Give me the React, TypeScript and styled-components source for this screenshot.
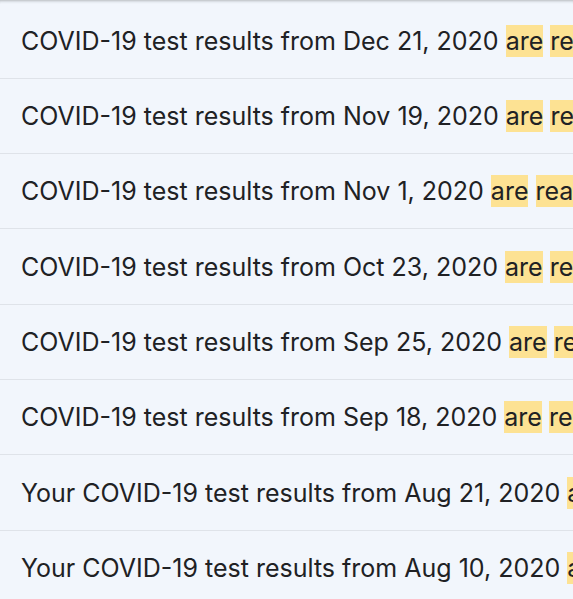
import styled, { createGlobalStyle } from "styled-components";

const GlobalStyle = createGlobalStyle`
  html, body {
    margin: 0;
    padding: 0;
    background: #f2f6fc;
  }
  body {
    font-family: Inter, Roboto, "Noto Sans", Arial, sans-serif;
    overflow: hidden;
  }
`;

const rows = [
  { prefix: "COVID-19 test results from", date: "Dec 21, 2020" },
  { prefix: "COVID-19 test results from", date: "Nov 19, 2020" },
  { prefix: "COVID-19 test results from", date: "Nov 1, 2020" },
  { prefix: "COVID-19 test results from", date: "Oct 23, 2020" },
  { prefix: "COVID-19 test results from", date: "Sep 25, 2020" },
  { prefix: "COVID-19 test results from", date: "Sep 18, 2020" },
  { prefix: "Your COVID-19 test results from", date: "Aug 21, 2020" },
  { prefix: "Your COVID-19 test results from", date: "Aug 10, 2020" },
];

export default function App() {
  return (
    <>
      <GlobalStyle />
      <List>
        {rows.map((r, i) => (
          <Row key={i}>
            <Subject>
              {r.prefix} {r.date} <Mark>are</Mark> <Mark>ready</Mark>
            </Subject>
          </Row>
        ))}
      </List>
    </>
  );
}

const List = styled.div`
  display: flex;
  flex-direction: column;
  padding-top: 3.5px;
  box-shadow: inset 0 3px 3px -2px rgba(60, 64, 67, 0.35);
  min-height: 599px;
  box-sizing: border-box;
`;

const Row = styled.div`
  height: 74.33px;
  display: flex;
  align-items: center;
  padding-left: 21px;
  border-bottom: 1px solid #dfe3e9;
  background: #f2f6fc;
  overflow: hidden;
  flex-shrink: 0;
`;

const Subject = styled.span`
  font-size: 25px;
  color: #202124;
  white-space: nowrap;
`;

const Mark = styled.span`
  background: #fde293;
  padding: 1px 0;
`;
